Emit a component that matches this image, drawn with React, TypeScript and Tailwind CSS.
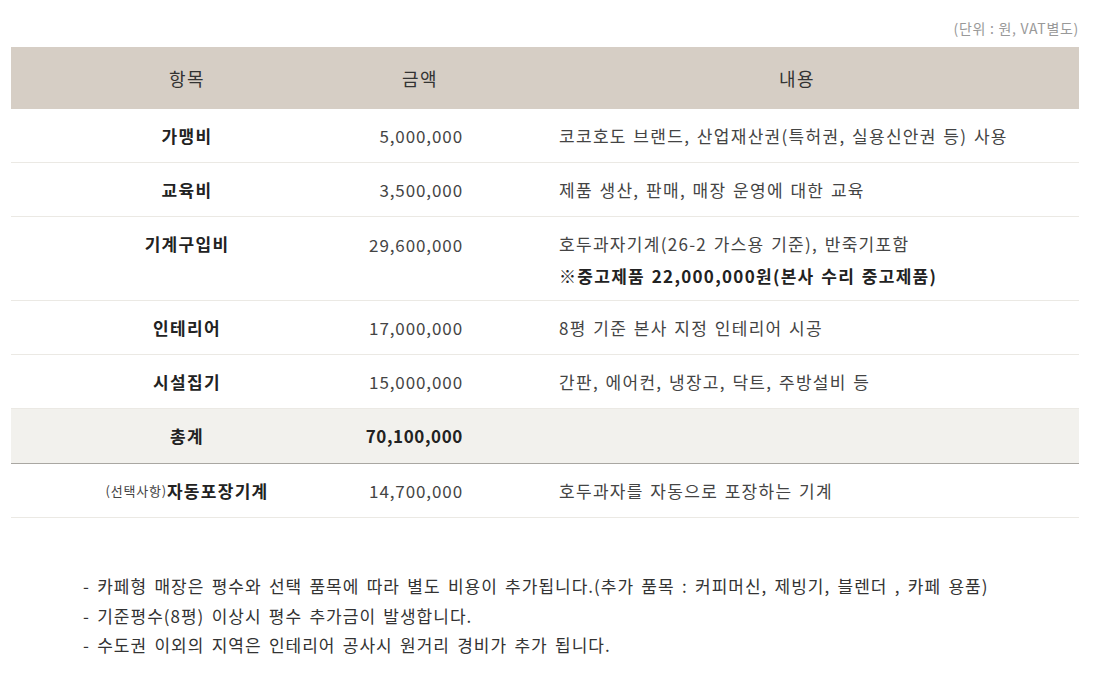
import React from "react";

const font = { fontFamily: '"Noto Sans CJK KR", "Noto Sans", sans-serif' };

type Row = { label: React.ReactNode; amount: string; content: React.ReactNode; tall?: boolean };

const rows: Row[] = [
  { label: "가맹비", amount: "5,000,000", content: "코코호도 브랜드, 산업재산권(특허권, 실용신안권 등) 사용" },
  { label: "교육비", amount: "3,500,000", content: "제품 생산, 판매, 매장 운영에 대한 교육" },
  {
    label: "기계구입비",
    amount: "29,600,000",
    tall: true,
    content: (
      <div className="flex flex-col gap-[6px]">
        <span>호두과자기계(26-2 가스용 기준), 반죽기포함</span>
        <span className="font-bold text-[#222]">※중고제품 22,000,000원(본사 수리 중고제품)</span>
      </div>
    ),
  },
  { label: "인테리어", amount: "17,000,000", content: "8평 기준 본사 지정 인테리어 시공" },
  { label: "시설집기", amount: "15,000,000", content: "간판, 에어컨, 냉장고, 닥트, 주방설비 등" },
];

const labelCls = "font-bold text-[17px] tracking-[1.3px] text-[#222]";
const amtCls = "pr-[14px] text-[17px] tracking-[0.9px] text-[#444]";
const contentCls = "pl-[82px] text-[17px] tracking-[1.3px] [word-spacing:1.5px] text-[#444]";

export default function App() {
  return (
    <div className="w-[1093px] h-[673px] bg-white text-[#333]" style={font}>
      <div className="pl-[11px] pr-[14px] pt-[18px]">
        <div className="text-right text-[14px] text-[#999] h-[29px] leading-[20px] tracking-[0.7px] [word-spacing:0px]">(단위 : 원, VAT별도)</div>
        <div className="grid grid-cols-[352px_114px_1fr]">
          <div className="bg-[#d6cec5] h-[62px] flex items-center justify-center text-[18px] tracking-[1.5px] text-[#333]">항목</div>
          <div className="bg-[#d6cec5] h-[62px] flex items-center justify-center text-[18px] tracking-[1.5px] text-[#333]">금액</div>
          <div className="bg-[#d6cec5] h-[62px] flex items-center justify-center pl-[38px] text-[18px] tracking-[1.5px] text-[#333]">내용</div>
          {rows.map((r, i) => (
            <React.Fragment key={i}>
              <div className={`border-b border-[#ebe9e4] flex justify-center ${labelCls} ${r.tall ? "h-[84px] pt-[14px]" : "h-[54px] items-center"}`}>{r.label}</div>
              <div className={`border-b border-[#ebe9e4] flex justify-end ${amtCls} ${r.tall ? "h-[84px] pt-[15px]" : "h-[54px] items-center"}`}>{r.amount}</div>
              <div className={`border-b border-[#ebe9e4] flex ${contentCls} ${r.tall ? "h-[84px] pt-[14px]" : "h-[54px] items-center"}`}>{r.content}</div>
            </React.Fragment>
          ))}
          <div className="bg-[#f2f1ed] h-[55px] border-b border-[#a9a7a2] flex items-center justify-center font-bold text-[17px] tracking-[1.3px] text-[#222]">총계</div>
          <div className="bg-[#f2f1ed] h-[55px] border-b border-[#a9a7a2] flex items-center justify-end pr-[14px] font-bold text-[17px] tracking-[0.6px] text-[#222]">70,100,000</div>
          <div className="bg-[#f2f1ed] h-[55px] border-b border-[#a9a7a2]"></div>
          <div className="h-[54px] border-b border-[#ebe9e4] flex items-center justify-center text-[#222]">
            <span className="text-[13px] text-[#444] font-normal tracking-[0.8px]">(선택사항)</span>
            <span className={labelCls}>자동포장기계</span>
          </div>
          <div className={`h-[54px] border-b border-[#ebe9e4] flex items-center justify-end ${amtCls}`}>14,700,000</div>
          <div className={`h-[54px] border-b border-[#ebe9e4] flex items-center ${contentCls}`}>호두과자를 자동으로 포장하는 기계</div>
        </div>
        <div className="pl-[72px] pt-[53px] text-[17px] text-[#333] leading-[29.5px] tracking-[1px] [word-spacing:2.5px]">
          <div>- 카페형 매장은 평수와 선택 품목에 따라 별도 비용이 추가됩니다.(추가 품목 : 커피머신, 제빙기, 블렌더 , 카페 용품)</div>
          <div>- 기준평수(8평) 이상시 평수 추가금이 발생합니다.</div>
          <div>- 수도권 이외의 지역은 인테리어 공사시 원거리 경비가 추가 됩니다.</div>
        </div>
      </div>
    </div>
  );
}
